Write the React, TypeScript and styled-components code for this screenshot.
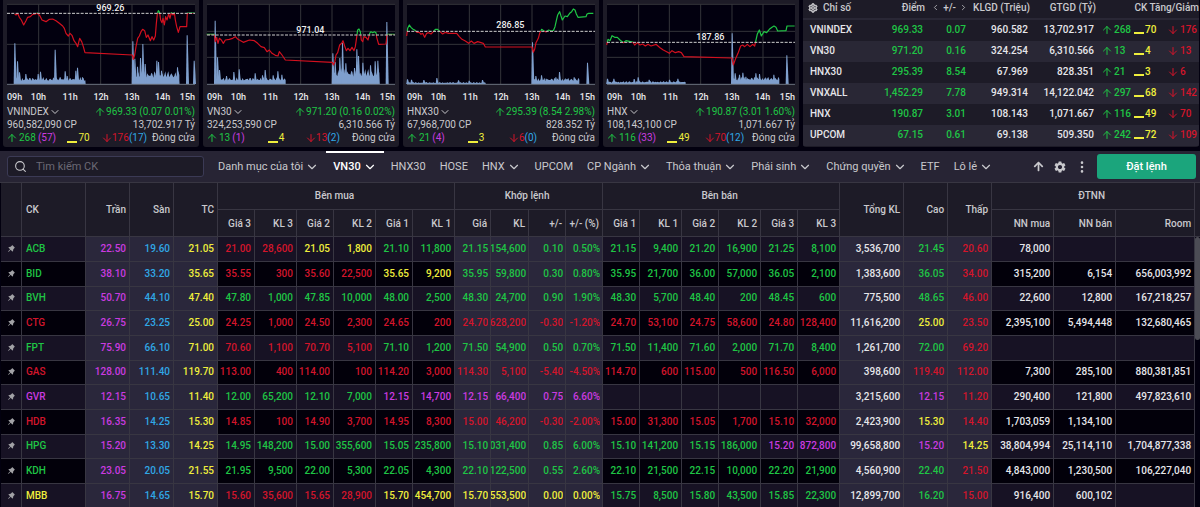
import React from "react";
import styled, { createGlobalStyle, css } from "styled-components";
import { ArrowDown, ArrowUp, ChevronDown, ChevronLeft, ChevronRight, Search } from "lucide-react";
import { AiFillPushpin, AiOutlineSetting } from "react-icons/ai";
import { BsThreeDotsVertical } from "react-icons/bs";
import { FaArrowUp } from "react-icons/fa";
import { MdSettings } from "react-icons/md";

const color = {
  page: "#02000f",
  panel: "#1d1b27",
  panelAlt: "#292735",
  toolbar: "#272434",
  line: "#383642",
  rowOdd: "#171224",
  rowEven: "#02000a",
  shade: "#2a273b",
  text: "#c9c9cd",
  white: "#e6e6ea",
  up: "#1fc545",
  down: "#d3152b",
  flat: "#efee3c",
  ceil: "#cb3be0",
  floor: "#30a8e6",
};

type Tone = "up" | "down" | "flat" | "ceil" | "floor" | "white";

const GlobalStyle = createGlobalStyle`
  *, *::before, *::after { box-sizing: border-box; }
  body {
    margin: 0;
    background: ${color.page};
    color: ${color.text};
    font-family: Roboto, "Liberation Sans", sans-serif;
    font-size: 10px;
  }
  button, input { font: inherit; color: inherit; }
  button { background: none; border: 0; padding: 0; cursor: pointer; }
`;

const Page = styled.div`
  display: flex;
  flex-direction: column;
  height: 100vh;
  overflow: hidden;
`;

/* ---------- Index cards ---------- */

const Overview = styled.section`
  display: grid;
  grid-template-columns: repeat(4, 196fr) 396fr;
  gap: 4px;
  padding: 0 1px 4px 3px;
`;

const Card = styled.article`
  min-width: 0;
  padding: 4px 4px 3px;
  background: ${color.panel};
  border-radius: 0 0 3px 3px;
`;

const Plot = styled.svg`
  display: block;
  width: 100%;
  height: 81px;
  background: ${color.page};
  overflow: visible;
`;

const Hours = styled.div`
  display: grid;
  grid-template-columns: 24fr 32fr 31fr 31fr 31fr 25fr 14fr;
  height: 20px;
  align-items: center;
  padding-top: 3px;
  font-size: 9px;
  font-weight: 500;
  color: ${color.white};
  white-space: nowrap;
`;

const CardLine = styled.div`
  display: flex;
  justify-content: space-between;
  align-items: center;
  line-height: 13px;
  white-space: nowrap;
`;

const CardCounts = styled.div`
  display: grid;
  grid-template-columns: 46fr 46fr 48fr 48fr;
  line-height: 13px;
  white-space: nowrap;
  > * { justify-self: center; }
  > :first-child { justify-self: start; }
  > :last-child { justify-self: end; }
`;

const IndexButton = styled.button`
  display: inline-flex;
  align-items: center;
`;

const Toned = styled.span<{ $tone: Tone }>`
  color: ${(p) => color[p.$tone]};
`;

const Count = styled.span<{ $tone: Tone; $gap?: number }>`
  display: inline-flex;
  align-items: center;
  vertical-align: middle;
  gap: ${(p) => p.$gap ?? 1}px;
  color: ${(p) => color[p.$tone]};
  svg { margin: 0 -1px; }
`;

const Dash = styled.span`
  align-self: flex-end;
  width: 10px;
  height: 2px;
  margin-bottom: 1px;
  background: ${color.flat};
`;

interface IndexData {
  name: string;
  base: string;
  refY: number;
  labelY: number;
  gridY: number[];
  price: string;
  level: number;
  lateLevel: number;
  start: number;
  spikes: [number, number][];
  value: string;
  change: string;
  shares: string;
  turnover: string;
  up: number;
  ceil: number;
  flat: number;
  down: number;
  floor: number;
}

const indexes: IndexData[] = [
  {
    name: "VNINDEX", base: "969.26", refY: 40, labelY: 33, gridY: [133], level: 14, lateLevel: 27, start: 48,
    price: "46,42 50,45 55,40 60,52 66,60 73,75 80,62 85,52 93,50 100,43 108,42 114,39 122,48 128,60 140,65 150,58 160,57 170,62 180,70 190,78 195,85 200,100 207,108 212,100 218,106 224,122 230,130 235,140 241,115 247,125 252,140 257,158 399,165 402,178 406,165 410,140 415,115 420,108 425,95 430,88 436,92 441,112 446,105 453,122 458,110 463,120 468,108 471,70 474,42 477,32 481,38 484,60 488,68 491,55 495,75 499,50 503,60 508,42 512,55 516,38 521,45 525,38 528,60 532,80 537,97 542,80 562,80 564,39 586,39",
    spikes: [[47, 122], [55, 68], [61, 35], [80, 30], [117, 30], [124, 37], [168, 103], [183, 20], [198, 38], [204, 24], [230, 40], [235, 49], [250, 20], [401, 128], [407, 76], [415, 52], [424, 78], [431, 120], [438, 60], [473, 70], [478, 66], [487, 40], [535, 50], [564, 146], [585, 70]],
    value: "969.33", change: "(0.07 0.01%)", shares: "960,582,090 CP", turnover: "13,702.917 Tỷ",
    up: 268, ceil: 57, flat: 70, down: 176, floor: 17,
  },
  {
    name: "VN30", base: "971.04", refY: 105, labelY: 98, gridY: [94, 172], level: 14, lateLevel: 32, start: 46,
    price: "22,103 45,103 48,125 52,112 56,130 60,115 66,120 72,130 78,120 90,118 100,115 108,110 116,118 124,122 132,127 150,120 165,122 175,130 185,140 195,143 203,155 210,150 218,160 228,166 236,168 240,155 248,165 258,180 399,187 402,195 406,188 410,165 415,158 421,135 427,130 431,122 436,138 441,152 446,145 452,152 458,142 464,152 468,140 472,112 475,90 479,87 483,95 486,120 490,125 494,110 500,112 506,120 511,100 515,95 520,98 525,95 530,98 532,112 538,133 560,132 563,103 586,103",
    spikes: [[48, 190], [55, 80], [61, 42], [82, 24], [104, 36], [120, 44], [168, 32], [190, 26], [198, 42], [222, 26], [236, 38], [248, 28], [401, 92], [408, 66], [422, 78], [430, 124], [440, 62], [466, 48], [473, 104], [478, 84], [491, 64], [514, 56], [528, 68], [536, 70], [563, 186]],
    value: "971.20", change: "(0.16 0.02%)", shares: "324,253,590 CP", turnover: "6,310.566 Tỷ",
    up: 13, ceil: 1, flat: 4, down: 13, floor: 2,
  },
  {
    name: "HNX30", base: "286.85", refY: 94, labelY: 84, gridY: [133], level: 4, lateLevel: 13, start: 22,
    price: "22,108 25,85 30,75 35,82 40,87 46,90 53,97 60,97 65,103 70,100 76,112 82,100 88,98 95,102 102,95 108,88 115,88 122,95 130,102 138,97 148,100 160,100 172,100 180,110 188,118 198,123 208,130 216,123 224,130 235,125 245,128 252,130 258,141 398,141 402,157 406,148 410,128 417,115 421,100 427,88 433,92 440,96 448,90 455,93 462,92 467,80 471,62 475,45 481,35 485,48 489,60 497,48 504,50 511,40 517,35 522,27 527,30 531,42 536,52 560,50 563,42 568,40 582,40",
    spikes: [[25, 14], [37, 13], [74, 12], [113, 18], [178, 11], [210, 10], [250, 12], [400, 125], [410, 24], [427, 26], [441, 16], [470, 20], [481, 36], [502, 14], [525, 20], [565, 64]],
    value: "295.39", change: "(8.54 2.98%)", shares: "67,968,700 CP", turnover: "828.352 Tỷ",
    up: 21, ceil: 4, flat: 3, down: 6, floor: 0,
  },
  {
    name: "HNX", base: "187.86", refY: 127, labelY: 119, gridY: [94, 172], level: 6, lateLevel: 15, start: 22,
    price: "22,135 26,118 32,122 38,107 46,112 54,112 62,120 72,128 80,122 90,124 100,126 106,135 114,128 122,135 130,132 138,138 146,133 155,138 170,133 182,143 192,150 202,155 210,160 218,152 228,158 238,155 246,158 254,170 398,174 402,195 408,178 416,160 424,138 430,135 436,140 444,133 452,140 460,133 466,138 470,120 474,102 480,90 486,108 494,95 502,98 510,88 518,82 524,78 530,82 535,93 560,92 563,78 586,78",
    spikes: [[25, 16], [44, 16], [105, 15], [117, 20], [150, 13], [211, 13], [236, 16], [399, 152], [408, 32], [421, 28], [431, 34], [440, 22], [470, 32], [481, 30], [500, 17], [524, 28], [563, 86]],
    value: "190.87", change: "(3.01 1.60%)", shares: "108,143,100 CP", turnover: "1,071.667 Tỷ",
    up: 116, ceil: 33, flat: 49, down: 70, floor: 12,
  },
];

const FLOOR_Y = 252;

/* Traded volume as a filled profile between two x positions. */
function profile(from: number, to: number, level: number) {
  const points = [`${from},${FLOOR_Y}`];
  for (let x = from; x <= to; x += 3) {
    const wave = Math.abs(Math.sin(x * 1.7) * Math.cos(x * 0.31));
    points.push(`${x},${Math.round(FLOOR_Y - level * (0.7 + wave * 0.8))}`);
  }
  points.push(`${to},${FLOOR_Y}`);
  return points.join(" ");
}

function IndexChart({ data }: { data: IndexData }) {
  const above = `above-${data.name}`;
  const below = `below-${data.name}`;
  return (
    <Plot viewBox="23 12 564 243" preserveAspectRatio="none" role="img" aria-label={`${data.name} intraday`}>
      <defs>
        <clipPath id={above}><rect x="0" y="0" width="600" height={data.refY - 1} /></clipPath>
        <clipPath id={below}><rect x="0" y={data.refY - 1} width="600" height="260" /></clipPath>
      </defs>
      <g stroke="#34343a" strokeWidth="3">
        {[118, 210, 304, 398, 491].map((x) => <line key={x} x1={x} x2={x} y1="12" y2="252" />)}
        {data.gridY.map((y) => <line key={y} x1="23" x2="587" y1={y} y2={y} />)}
        <line x1="23" x2="587" y1="13" y2="13" />
      </g>
      <g fill="#7f9fcd" stroke="none">
        <polygon points={profile(data.start, 259, data.level)} />
        <polygon points={profile(399, 540, data.lateLevel)} />
        {data.spikes.map(([x, h]) => (
          <polygon key={x} points={`${x - 4},${FLOOR_Y} ${x - 2},${FLOOR_Y - h} ${x + 1},${FLOOR_Y - h} ${x + 5},${FLOOR_Y}`} />
        ))}
      </g>
      <line x1="23" x2="587" y1="253" y2="253" stroke="#6f7683" strokeWidth="3" />
      <g fill="none" strokeWidth="3.6" strokeLinejoin="round">
        <polyline points={data.price} stroke="#1fc545" clipPath={`url(#${above})`} />
        <polyline points={data.price} stroke="#d3101f" clipPath={`url(#${below})`} />
      </g>
      <line x1="23" x2="587" y1={data.refY} y2={data.refY} stroke="#cfcfcf" strokeWidth="3" strokeDasharray="9 4" />
      <text x="333" y={data.labelY} textAnchor="middle" fill="#f0f0f0" fontSize="27" fontWeight="500">{data.base}</text>
    </Plot>
  );
}

function IndexCard({ data }: { data: IndexData }) {
  return (
    <Card>
      <IndexChart data={data} />
      <Hours>
        {["09h", "10h", "11h", "12h", "13h", "14h", "15h"].map((h) => <span key={h}>{h}</span>)}
      </Hours>
      <CardLine>
        <IndexButton type="button">{data.name}<ChevronDown size={12} /></IndexButton>
        <Count $tone="up"><ArrowUp size={12} />{data.value} {data.change}</Count>
      </CardLine>
      <CardLine>
        <span>{data.shares}</span>
        <span>{data.turnover}</span>
      </CardLine>
      <CardCounts>
        <Count $tone="up" $gap={2}><ArrowUp size={12} />{data.up}<Toned $tone="ceil">({data.ceil})</Toned></Count>
        <Count $tone="flat"><Dash />{data.flat}</Count>
        <Count $tone="down" $gap={0}><ArrowDown size={12} />{data.down}<Toned $tone="floor">({data.floor})</Toned></Count>
        <span>Đóng cửa</span>
      </CardCounts>
    </Card>
  );
}

/* ---------- Index summary ---------- */

const SummaryPanel = styled.div`
  background: ${color.panel};
  border-radius: 0 0 3px 3px;
  overflow: hidden;
`;

const SummaryTable = styled.table`
  width: 100%;
  table-layout: fixed;
  border-collapse: separate;
  border-spacing: 0;
  white-space: nowrap;
  font-weight: 500;
  th, td { padding: 0 2px 2px 0; text-align: right; }
  th:first-child, td:first-child { text-align: left; padding-left: 7px; }
  th { height: 20px; padding: 0 0 3px; border-bottom: 2px solid ${color.panelAlt}; font-weight: 500; }
  th:first-child { padding-left: 5px; }
  td { height: 21px; color: ${color.white}; }
  tbody tr:nth-child(even) { background: ${color.panelAlt}; }
`;

const SummaryCount = styled.td<{ $pad: number }>`
  && { text-align: left; padding-left: ${(p) => p.$pad}px; }
`;

const HeadGroup = styled.span`
  display: flex;
  align-items: center;
  justify-content: flex-end;
  gap: 3px;
`;

const HeadStart = styled.span`
  display: flex;
  align-items: center;
  gap: 5px;
`;

const ToneTd = styled.td<{ $tone: Tone }>`
  && { color: ${(p) => color[p.$tone]}; }
`;

const summary = [
  ["VNINDEX", "969.33", "0.07", "960.582", "13,702.917", "268", "70", "176"],
  ["VN30", "971.20", "0.16", "324.254", "6,310.566", "13", "4", "13"],
  ["HNX30", "295.39", "8.54", "67.969", "828.351", "21", "3", "6"],
  ["VNXALL", "1,452.29", "7.78", "949.314", "14,122.042", "297", "68", "142"],
  ["HNX", "190.87", "3.01", "108.143", "1,071.667", "116", "49", "70"],
  ["UPCOM", "67.15", "0.61", "69.138", "509.350", "242", "72", "109"],
];

function Summary() {
  return (
    <SummaryPanel>
      <SummaryTable>
        <colgroup>
          {[68, 54, 43, 62, 66, 37, 35, 31].map((w, i) => <col key={i} width={w} />)}
        </colgroup>
        <thead>
          <tr>
            <th>
              <HeadStart>
                <button type="button" aria-label="Cài đặt chỉ số">
                  <AiOutlineSetting size={10} strokeWidth={90} display="block" />
                </button>
                Chỉ số
              </HeadStart>
            </th>
            <th>Điểm</th>
            <th>
              <HeadGroup>
                <button type="button" aria-label="Trước"><ChevronLeft size={9} display="block" /></button>
                +/-
                <button type="button" aria-label="Sau"><ChevronRight size={9} display="block" /></button>
              </HeadGroup>
            </th>
            <th>KLGD (Triệu)</th>
            <th>GTGD (Tỷ)</th>
            <th colSpan={3}>CK Tăng/Giảm</th>
          </tr>
        </thead>
        <tbody>
          {summary.map(([name, point, diff, vol, val, up, flat, down]) => (
            <tr key={name}>
              <td>{name}</td>
              <ToneTd $tone="up">{point}</ToneTd>
              <ToneTd $tone="up">{diff}</ToneTd>
              <td>{vol}</td>
              <td>{val}</td>
              <SummaryCount $pad={6}><Count $tone="up" $gap={2}><ArrowUp size={12} />{up}</Count></SummaryCount>
              <SummaryCount $pad={1}><Count $tone="flat"><Dash />{flat}</Count></SummaryCount>
              <SummaryCount $pad={0}><Count $tone="down" $gap={2}><ArrowDown size={12} />{down}</Count></SummaryCount>
            </tr>
          ))}
        </tbody>
      </SummaryTable>
    </SummaryPanel>
  );
}

/* ---------- Toolbar ---------- */

const Toolbar = styled.nav`
  display: flex;
  align-items: center;
  height: 32px;
  padding: 0 4px 0 7px;
  background: ${color.toolbar};
  border-bottom: 1px solid ${color.line};
  font-size: 11px;
`;

const SearchBox = styled.label`
  display: flex;
  align-items: center;
  gap: 9px;
  width: 197px;
  height: 21px;
  margin-right: 7px;
  padding: 0 6px;
  background: ${color.panel};
  border: 1px solid #3b3a55;
  border-radius: 3px;
`;

const SearchInput = styled.input`
  flex: 1;
  min-width: 0;
  padding: 0;
  background: none;
  border: 0;
  outline: 0;
  &::placeholder { color: #6b6975; opacity: 1; }
`;

const Tab = styled.button<{ $active?: boolean }>`
  display: flex;
  align-items: center;
  gap: 2px;
  height: 100%;
  padding: 0 7px 2px;
  border-top: 2px solid transparent;
  white-space: nowrap;
  ${(p) => p.$active && css`
    color: #fff;
    font-weight: 500;
    border-top-color: #fff;
  `}
`;

const Tools = styled.div`
  display: flex;
  align-items: center;
  gap: 8px;
  margin-left: auto;
`;

const ToolButton = styled.button`
  display: flex;
  justify-content: center;
  width: 14px;
`;

const OrderButton = styled.button`
  width: 99px;
  height: 25px;
  color: #fff;
  font-weight: 500;
  background: #1ba57c;
  border-radius: 3px;
`;

const tabs: { label: string; menu?: boolean; active?: boolean }[] = [
  { label: "Danh mục của tôi", menu: true },
  { label: "VN30", menu: true, active: true },
  { label: "HNX30" },
  { label: "HOSE" },
  { label: "HNX", menu: true },
  { label: "UPCOM" },
  { label: "CP Ngành", menu: true },
  { label: "Thỏa thuận", menu: true },
  { label: "Phái sinh", menu: true },
  { label: "Chứng quyền", menu: true },
  { label: "ETF" },
  { label: "Lô lẻ", menu: true },
];

/* ---------- Price board ---------- */

const Board = styled.main`
  display: flex;
  flex: 1;
  min-height: 0;
  overflow: hidden;
  padding-left: 1px;
`;

const BoardTable = styled.table`
  flex: 1;
  align-self: flex-start;
  width: 100%;
  min-width: 0;
  table-layout: fixed;
  border-collapse: separate;
  border-spacing: 0;
  white-space: nowrap;
  font-weight: 500;
  th, td {
    padding: 0 3px 0 0;
    text-align: right;
    border-right: 1px solid ${color.line};
    border-bottom: 1px solid ${color.line};
  }
  th { height: 27px; font-weight: 500; background: ${color.panel}; }
  td { overflow: hidden; padding-bottom: 2px; }
  tbody tr { height: 25px; background: ${color.rowOdd}; }
  tbody tr:nth-child(even) { background: ${color.rowEven}; }
  tbody tr:nth-child(3n) { height: 24px; }
`;

const GroupHead = styled.th`
  && { text-align: center; padding-bottom: 2px; }
`;

const NameHead = styled.th`
  && { text-align: left; padding-left: 4px; }
`;

const NameCell = styled.td<{ $tone: Tone }>`
  && { text-align: left; padding-left: 4px; color: ${(p) => color[p.$tone]}; }
`;

const PinCell = styled.td`
  && { padding: 0 0 2px; text-align: center; color: #a2a2a6; }
`;

const PinButton = styled.button`
  display: block;
  margin: 0 auto;
`;

const Value = styled.td<{ $tone: Tone; $shade?: boolean }>`
  color: ${(p) => color[p.$tone]};
  ${(p) => p.$shade && css`background: ${color.shade};`}
`;

const MatchValue = styled(Value)`
  && { padding-right: 2px; }
`;

/* Keeps the last digits in view when a volume is wider than its column. */
const Tail = styled.span`
  display: flex;
  justify-content: flex-end;
  overflow: hidden;
`;

const ScrollTrack = styled.div`
  display: flex;
  flex-direction: column;
  width: 5px;
`;

const ScrollHead = styled.div`
  height: 54px;
  background: ${color.panel};
  border-bottom: 1px solid ${color.line};
`;

const ScrollThumb = styled.div`
  height: 103px;
  background: #4c4c55;
  border-radius: 3px;
`;

interface Quote {
  code: string;
  bands: [string, string, string];
  buy: string[];
  match: string[];
  sell: string[];
  total: string;
  high: string;
  low: string;
  foreign: string[];
}

const quotes: Quote[] = [
  { code: "ACB", bands: ["22.50", "19.60", "21.05"], buy: ["21.00", "28,600", "21.05", "1,800", "21.10", "11,800"], match: ["21.15", "154,600", "0.10", "0.50%"], sell: ["21.15", "9,400", "21.20", "16,900", "21.25", "8,100"], total: "3,536,700", high: "21.45", low: "20.60", foreign: ["78,000", "", ""] },
  { code: "BID", bands: ["38.10", "33.20", "35.65"], buy: ["35.55", "300", "35.60", "22,500", "35.65", "9,200"], match: ["35.95", "59,800", "0.30", "0.80%"], sell: ["35.95", "21,700", "36.00", "57,000", "36.05", "2,100"], total: "1,383,600", high: "36.05", low: "34.00", foreign: ["315,200", "6,154", "656,003,992"] },
  { code: "BVH", bands: ["50.70", "44.10", "47.40"], buy: ["47.80", "1,000", "47.85", "10,000", "48.00", "2,500"], match: ["48.30", "24,700", "0.90", "1.90%"], sell: ["48.30", "5,700", "48.40", "200", "48.45", "600"], total: "775,500", high: "48.65", low: "46.00", foreign: ["22,600", "12,800", "167,218,257"] },
  { code: "CTG", bands: ["26.75", "23.25", "25.00"], buy: ["24.25", "1,000", "24.50", "2,300", "24.65", "200"], match: ["24.70", "628,200", "-0.30", "-1.20%"], sell: ["24.70", "53,100", "24.75", "58,600", "24.80", "128,400"], total: "11,616,200", high: "25.00", low: "23.50", foreign: ["2,395,100", "5,494,448", "132,680,465"] },
  { code: "FPT", bands: ["75.90", "66.10", "71.00"], buy: ["70.60", "1,100", "70.70", "5,100", "71.10", "1,200"], match: ["71.50", "54,900", "0.50", "0.70%"], sell: ["71.50", "11,400", "71.60", "2,000", "71.70", "8,400"], total: "1,261,700", high: "72.00", low: "69.20", foreign: ["", "", ""] },
  { code: "GAS", bands: ["128.00", "111.40", "119.70"], buy: ["113.00", "400", "114.00", "100", "114.20", "3,000"], match: ["114.30", "5,100", "-5.40", "-4.50%"], sell: ["114.70", "600", "115.00", "500", "116.50", "6,000"], total: "398,600", high: "119.40", low: "112.00", foreign: ["7,300", "285,100", "880,381,851"] },
  { code: "GVR", bands: ["12.15", "10.65", "11.40"], buy: ["12.00", "65,200", "12.10", "7,000", "12.15", "14,700"], match: ["12.15", "66,400", "0.75", "6.60%"], sell: ["", "", "", "", "", ""], total: "3,215,600", high: "12.15", low: "11.20", foreign: ["290,400", "121,800", "497,823,610"] },
  { code: "HDB", bands: ["16.35", "14.25", "15.30"], buy: ["14.85", "100", "14.90", "3,700", "14.95", "8,300"], match: ["15.00", "46,200", "-0.30", "-2.00%"], sell: ["15.00", "31,300", "15.05", "1,700", "15.10", "32,000"], total: "2,423,900", high: "15.30", low: "14.40", foreign: ["1,703,059", "1,134,100", ""] },
  { code: "HPG", bands: ["15.20", "13.30", "14.25"], buy: ["14.95", "148,200", "15.00", "355,600", "15.05", "235,800"], match: ["15.10", "031,400", "0.85", "6.00%"], sell: ["15.10", "141,200", "15.15", "186,000", "15.20", "872,800"], total: "99,658,800", high: "15.20", low: "14.25", foreign: ["38,804,994", "25,114,110", "1,704,877,338"] },
  { code: "KDH", bands: ["23.05", "20.05", "21.55"], buy: ["21.95", "9,500", "22.00", "5,300", "22.05", "4,300"], match: ["22.10", "122,500", "0.55", "2.60%"], sell: ["22.10", "21,500", "22.15", "10,000", "22.20", "21,900"], total: "4,560,900", high: "22.40", low: "21.50", foreign: ["4,843,000", "1,230,500", "106,227,040"] },
  { code: "MBB", bands: ["16.75", "14.65", "15.70"], buy: ["15.60", "35,600", "15.65", "28,900", "15.70", "454,700"], match: ["15.70", "553,500", "0.00", "0.00%"], sell: ["15.75", "8,500", "15.80", "43,500", "15.85", "22,300"], total: "12,899,700", high: "16.20", low: "15.00", foreign: ["916,400", "600,102", ""] },
];

function toneOf(price: string, [ceil, floor, ref]: Quote["bands"]): Tone {
  if (price === ceil) return "ceil";
  if (price === floor) return "floor";
  if (price === ref) return "flat";
  return Number(price) > Number(ref) ? "up" : "down";
}

const columnWidths = [
  21, 64, 44, 44, 44, 37, 42, 37, 42, 37, 42, 36, 38, 37, 37,
  37, 42, 37, 42, 37, 42, 64, 44, 44, 62, 62, 79,
];

function DepthCells({ values, bands }: { values: string[]; bands: Quote["bands"] }) {
  return (
    <>
      {values.map((v, i) => (
        <Value key={i} $tone={toneOf(values[i - (i % 2)], bands)}>{v}</Value>
      ))}
    </>
  );
}

function QuoteRow({ quote }: { quote: Quote }) {
  const matchTone = toneOf(quote.match[0], quote.bands);
  return (
    <tr>
      <PinCell>
        <PinButton type="button" aria-label={`Ghim ${quote.code}`}><AiFillPushpin size={9} display="block" /></PinButton>
      </PinCell>
      <NameCell $tone={matchTone}>{quote.code}</NameCell>
      <Value $tone="ceil" $shade>{quote.bands[0]}</Value>
      <Value $tone="floor" $shade>{quote.bands[1]}</Value>
      <Value $tone="flat" $shade>{quote.bands[2]}</Value>
      <DepthCells values={quote.buy} bands={quote.bands} />
      {quote.match.map((v, i) => (
        <MatchValue key={i} $tone={matchTone} $shade><Tail>{v}</Tail></MatchValue>
      ))}
      <DepthCells values={quote.sell} bands={quote.bands} />
      <Value $tone="white" $shade>{quote.total}</Value>
      <Value $tone={toneOf(quote.high, quote.bands)} $shade>{quote.high}</Value>
      <Value $tone={toneOf(quote.low, quote.bands)} $shade>{quote.low}</Value>
      {quote.foreign.map((v, i) => <Value key={i} $tone="white">{v}</Value>)}
    </tr>
  );
}

export default function App() {
  return (
    <Page>
      <GlobalStyle />
      <Overview>
        {indexes.map((d) => <IndexCard key={d.name} data={d} />)}
        <Summary />
      </Overview>
      <Toolbar>
        <SearchBox>
          <Search size={13} />
          <SearchInput type="search" placeholder="Tìm kiếm CK" aria-label="Tìm kiếm CK" />
        </SearchBox>
        {tabs.map((t) => (
          <Tab key={t.label} type="button" $active={t.active}>
            {t.label}
            {t.menu && <ChevronDown size={14} />}
          </Tab>
        ))}
        <Tools>
          <ToolButton type="button" aria-label="Thu gọn"><FaArrowUp size={11} /></ToolButton>
          <ToolButton type="button" aria-label="Cài đặt"><MdSettings size={14} /></ToolButton>
          <ToolButton type="button" aria-label="Thêm"><BsThreeDotsVertical size={14} /></ToolButton>
          <OrderButton type="button">Đặt lệnh</OrderButton>
        </Tools>
      </Toolbar>
      <Board>
        <BoardTable>
          <colgroup>
            {columnWidths.map((w, i) => <col key={i} width={w} />)}
          </colgroup>
          <thead>
            <tr>
              <th rowSpan={2} aria-label="Ghim" />
              <NameHead rowSpan={2}>CK</NameHead>
              <th rowSpan={2}>Trần</th>
              <th rowSpan={2}>Sàn</th>
              <th rowSpan={2}>TC</th>
              <GroupHead colSpan={6}>Bên mua</GroupHead>
              <GroupHead colSpan={4}>Khớp lệnh</GroupHead>
              <GroupHead colSpan={6}>Bên bán</GroupHead>
              <th rowSpan={2}>Tổng KL</th>
              <th rowSpan={2}>Cao</th>
              <th rowSpan={2}>Thấp</th>
              <GroupHead colSpan={3}>ĐTNN</GroupHead>
            </tr>
            <tr>
              {["Giá 3", "KL 3", "Giá 2", "KL 2", "Giá 1", "KL 1", "Giá", "KL", "+/-", "+/- (%)",
                "Giá 1", "KL 1", "Giá 2", "KL 2", "Giá 3", "KL 3", "NN mua", "NN bán", "Room"].map((h, i) => (
                <th key={i}>{h}</th>
              ))}
            </tr>
          </thead>
          <tbody>
            {quotes.map((q) => <QuoteRow key={q.code} quote={q} />)}
          </tbody>
        </BoardTable>
        <ScrollTrack>
          <ScrollHead />
          <ScrollThumb />
        </ScrollTrack>
      </Board>
    </Page>
  );
}
